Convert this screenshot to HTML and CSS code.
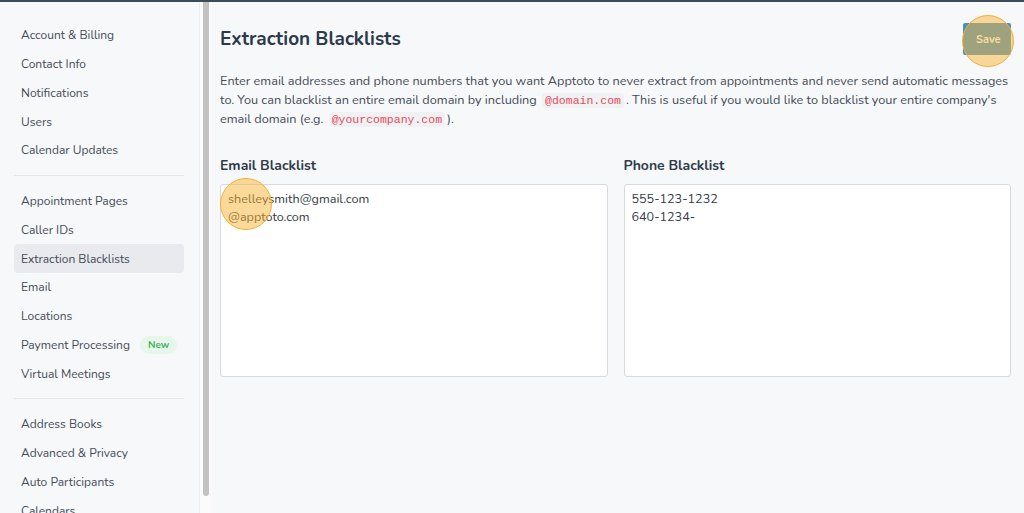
FILE: index.html
```html
<!DOCTYPE html>
<html lang="en">
<head>
    <meta charset="UTF-8">
    <meta name="viewport" content="width=device-width, initial-scale=1.0">
    <title>Extraction Blacklists - Apptoto</title>
    <link rel="stylesheet" href="styles.css">
</head>
<body>
    <div class="top-line"></div>
    <div class="layout">
        <div class="sidebar">
            <ul class="menu">
                <li><a href="#">Account &amp; Billing</a></li>
                <li><a href="#">Contact Info</a></li>
                <li><a href="#">Notifications</a></li>
                <li><a href="#">Users</a></li>
                <li><a href="#">Calendar Updates</a></li>
            </ul>
            <div class="menu-sep"></div>
            <ul class="menu">
                <li><a href="#">Appointment Pages</a></li>
                <li><a href="#">Caller IDs</a></li>
                <li><a href="#" class="active">Extraction Blacklists</a></li>
                <li><a href="#">Email</a></li>
                <li><a href="#">Locations</a></li>
                <li><a href="#">Payment Processing <span class="badge">New</span></a></li>
                <li><a href="#">Virtual Meetings</a></li>
            </ul>
            <div class="menu-sep"></div>
            <ul class="menu">
                <li><a href="#">Address Books</a></li>
                <li><a href="#">Advanced &amp; Privacy</a></li>
                <li><a href="#">Auto Participants</a></li>
                <li><a href="#">Calendars</a></li>
            </ul>
        </div>
        <div class="scroll-track">
            <div class="scroll-thumb"></div>
        </div>

        <div class="main">
            <div class="page-head">
                <h1>Extraction Blacklists</h1>
                <div class="save-wrap">
                    <button class="btn-save">Save</button>
                    <span class="click-dot"></span>
                </div>
            </div>
            <p class="intro">Enter email addresses and phone numbers that you want Apptoto to never extract from appointments and never send automatic messages to. You can blacklist an entire email domain by including <code>@domain.com</code>. This is useful if you would like to blacklist your entire company's email domain (e.g. <code>@yourcompany.com</code>).</p>

            <div class="lists">
                <div class="list-col">
                    <label for="email-list">Email Blacklist</label>
                    <div class="box-wrap">
                        <textarea id="email-list">shelleysmith@gmail.com
@apptoto.com</textarea>
                        <span class="click-dot dot-email"></span>
                    </div>
                </div>
                <div class="list-col">
                    <label for="phone-list">Phone Blacklist</label>
                    <div class="box-wrap">
                        <textarea id="phone-list">555-123-1232
640-1234-</textarea>
                    </div>
                </div>
            </div>
        </div>
    </div>
</body>
</html>
```

FILE: styles.css
```css
body {
    font-family: "Nunito", Lato, "Noto Sans", sans-serif;
    margin: 0;
    background-color: #f7f8fa;
    color: #3b4350;
    height: 513px;
    overflow: hidden;
}
.top-line {
    height: 2px;
    background-color: #3c4a5b;
}
.layout {
    display: flex;
    height: 511px;
}
.sidebar {
    width: 170px;
    padding: 19px 15px 0 14px;
    overflow: hidden;
    flex-shrink: 0;
}
.menu {
    list-style-type: none;
    margin: 0;
    padding: 0;
}
.menu a {
    display: flex;
    align-items: center;
    height: 28.75px;
    padding: 0 7px;
    border-radius: 4px;
    color: #454c57;
    text-decoration: none;
    font-size: 12px;
    white-space: nowrap;
}
.menu a.active {
    background-color: #e8eaee;
}
.badge {
    margin-left: 10px;
    padding: 2px 8px;
    border-radius: 9px;
    background-color: #e7f6ea;
    color: #45b15f;
    font-size: 10px;
    font-weight: bold;
}
.menu-sep {
    height: 1px;
    background-color: #e4e6ea;
    margin: 10px 0 11px;
}
.scroll-track {
    width: 12px;
    flex-shrink: 0;
    background-color: #fbfbfc;
    border-left: 1px solid #ebedf0;
    padding: 0 2px 0 3px;
    box-sizing: border-box;
}
.scroll-thumb {
    height: 494px;
    background-color: #c2c2c2;
    border-radius: 0 0 3px 3px;
}
.main {
    flex: 1;
    padding: 0 13px 0 9px;
}
.page-head {
    display: flex;
    justify-content: space-between;
    align-items: center;
    height: 69px;
    padding-top: 4px;
    box-sizing: border-box;
}
h1 {
    margin: 0;
    font-size: 19px;
    color: #2c3a4c;
}
.save-wrap {
    position: relative;
}
.btn-save {
    display: block;
    background-color: #4690cb;
    color: white;
    border: none;
    border-radius: 2px;
    font-family: inherit;
    font-weight: bold;
    font-size: 11px;
    padding: 9px 13px 8px;
    width: 48px;
}
.click-dot {
    position: absolute;
    left: 50%;
    top: 50%;
    width: 50px;
    height: 50px;
    margin: -24px 0 0 -25px;
    border-radius: 50%;
    border: 1px solid #f2b136;
    background-color: rgba(247, 180, 52, 0.5);
    pointer-events: none;
}
.intro {
    margin: 0;
    font-size: 12.7px;
    line-height: 19px;
    color: #454c57;
}
code {
    font-family: "Liberation Mono", monospace;
    font-size: 11.5px;
    line-height: 1;
    color: #e64b5c;
    background-color: #f0f1f3;
    padding: 1px 3px;
    margin: 0 2px;
    border-radius: 3px;
}
.lists {
    display: flex;
    gap: 16px;
    margin-top: 28px;
}
.list-col {
    flex: 1;
}
label {
    display: block;
    font-weight: bold;
    font-size: 14px;
    color: #2f3b4b;
    margin-bottom: 9px;
}
.box-wrap {
    position: relative;
}
textarea {
    display: block;
    width: 100%;
    height: 193px;
    box-sizing: border-box;
    border: 1px solid #d7dae2;
    border-radius: 3px;
    background-color: white;
    padding: 5px 7px;
    font-family: inherit;
    font-size: 12.6px;
    line-height: 18px;
    color: #353c47;
    resize: none;
}
.dot-email {
    left: 26px;
    top: 20px;
    margin: -26px 0 0 -26px;
}
```
